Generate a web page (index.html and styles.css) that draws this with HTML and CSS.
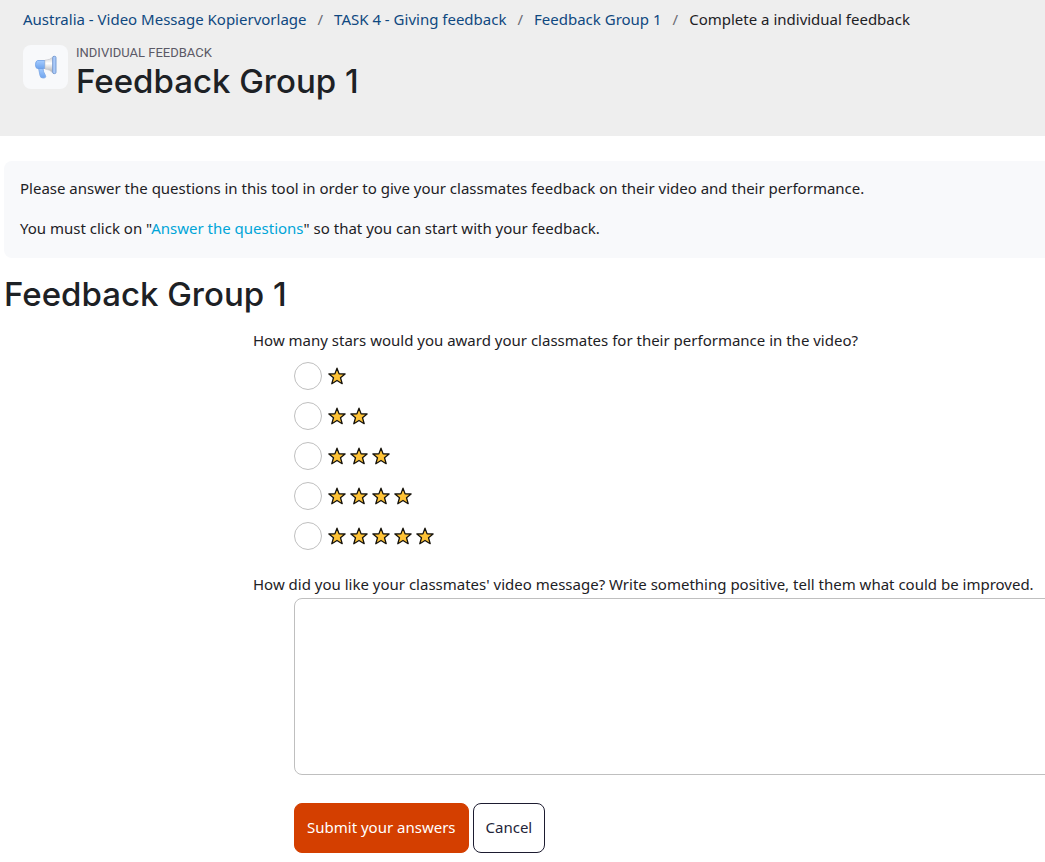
FILE: index.html
```
<!DOCTYPE html>
<html lang="en">
<head>
<meta charset="utf-8">
<meta name="viewport" content="width=device-width, initial-scale=1">
<title>Feedback Group 1</title>
<link rel="stylesheet" href="styles.css">
</head>
<body>
<svg class="defs" aria-hidden="true">
  <symbol id="star" viewBox="0 0 18 18">
    <path d="M9 1.200 L11.100 6.900 L17.100 7 L12.500 10.700 L14.200 16.700 L9 13.500 L3.800 16.700 L5.500 10.700 L.9 7 L6.900 6.900 Z" fill="#ffc336" stroke="#16130c" stroke-width="1.3" stroke-linejoin="round"/>
  </symbol>
</svg>
<header class="page-header">
  <nav aria-label="Breadcrumb">
    <ol class="breadcrumb">
      <li><a href="#">Australia - Video Message Kopiervorlage</a></li>
      <li><a href="#">TASK 4 - Giving feedback</a></li>
      <li><a href="#">Feedback Group 1</a></li>
      <li>Complete a individual feedback</li>
    </ol>
  </nav>
  <div class="activity">
    <div class="activity-icon">
      <svg viewBox="0 0 24 24" width="24" height="24" aria-hidden="true">
        <defs>
          <linearGradient id="blue" x1="0" y1="0" x2="0" y2="1"><stop offset="0" stop-color="#a5ccff"/><stop offset="1" stop-color="#6fa4ee"/></linearGradient>
          <linearGradient id="cone" x1="0" y1="0" x2="0" y2="1"><stop offset="0" stop-color="#cfcfd2"/><stop offset=".4" stop-color="#fff"/><stop offset="1" stop-color="#a9a9ad"/></linearGradient>
        </defs>
        <path d="M4.500 13 L9 13.500 Q9 16.500 11.500 20.500 Q12.500 23 9 23 Q6.300 23 6 20.500 Z" fill="url(#blue)" stroke="#78a5e4" stroke-width=".8"/>
        <path d="M3.500 5.500 H11 V13.500 H3.500 Q1.500 13.500 1.500 9.800 Q1.500 6 3.500 5.500 Z" fill="url(#blue)" stroke="#6d9ee5" stroke-width=".8"/>
        <path d="M11 5.200 Q16 5 19 2 V18 Q16 14.500 11 14 Z" fill="url(#cone)" stroke="#c3c3c8" stroke-width=".6"/>
        <rect x="18.700" y="1.300" width="3.300" height="17.300" rx="1.300" fill="#a9c9f8" stroke="#7196cf" stroke-width=".9"/>
      </svg>
    </div>
    <div class="activity-title">
      <div class="activity-type">INDIVIDUAL FEEDBACK</div>
      <h1>Feedback Group 1</h1>
    </div>
  </div>
</header>
<main class="content">
  <section class="intro">
    <p>Please answer the questions in this tool in order to give your classmates feedback on their video and their performance.</p>
    <p>You must click on "<a href="#">Answer the questions</a>" so that you can start with your feedback.</p>
  </section>
  <h2>Feedback Group 1</h2>
  <form class="questions">
    <fieldset class="rating">
      <legend>How many stars would you award your classmates for their performance in the video?</legend>
      <label class="option"><input type="radio" name="stars" value="1" aria-label="1 star"><svg class="star"><use href="#star"/></svg></label>
      <label class="option"><input type="radio" name="stars" value="2" aria-label="2 stars"><svg class="star"><use href="#star"/></svg><svg class="star"><use href="#star"/></svg></label>
      <label class="option"><input type="radio" name="stars" value="3" aria-label="3 stars"><svg class="star"><use href="#star"/></svg><svg class="star"><use href="#star"/></svg><svg class="star"><use href="#star"/></svg></label>
      <label class="option"><input type="radio" name="stars" value="4" aria-label="4 stars"><svg class="star"><use href="#star"/></svg><svg class="star"><use href="#star"/></svg><svg class="star"><use href="#star"/></svg><svg class="star"><use href="#star"/></svg></label>
      <label class="option"><input type="radio" name="stars" value="5" aria-label="5 stars"><svg class="star"><use href="#star"/></svg><svg class="star"><use href="#star"/></svg><svg class="star"><use href="#star"/></svg><svg class="star"><use href="#star"/></svg><svg class="star"><use href="#star"/></svg></label>
    </fieldset>
    <div class="comment">
      <label for="comment">How did you like your classmates' video message? Write something positive, tell them what could be improved.</label>
      <textarea id="comment" rows="7"></textarea>
    </div>
    <div class="actions">
      <button class="button primary" type="submit">Submit your answers</button>
      <button class="button secondary" type="button">Cancel</button>
    </div>
  </form>
</main>
</body>
</html>
```
FILE: styles.css
```
* { box-sizing: border-box; }
body {
  margin: 0;
  overflow-x: hidden;
  background: #fff;
  color: #1d2125;
  font: 15px/24px "Noto Sans", sans-serif;
}
.defs { display: none; }
a { text-decoration: none; }
.page-header {
  background: #eee;
  padding: 7px 23px 35px;
}
.breadcrumb {
  display: flex;
  flex-wrap: wrap;
  margin: 0;
  padding: 0;
  list-style: none;
}
.breadcrumb a { color: #0f4880; }
.breadcrumb li + li::before {
  content: "/";
  padding: 0 11px;
  color: #6a6a73;
}
.activity {
  display: flex;
  align-items: flex-start;
  gap: 8px;
  padding-top: 14px;
}
.activity-icon {
  display: grid;
  place-items: center;
  width: 45px;
  height: 44px;
  border-radius: 8px;
  background: #f8f9fb;
}
.activity-type {
  color: #5b5966;
  font-family: Roboto, sans-serif;
  font-size: 13px;
  line-height: 16px;
}
h1, h2 {
  margin: 0;
  font-family: Inter, sans-serif;
  font-size: 33px;
  line-height: 40px;
  font-weight: 500;
}
.content {
  margin-right: -16px;
  padding: 25px 0 8px 4px;
}
.intro {
  padding: 15px 16px 18px;
  border-radius: 8px;
  background: #f8f9fb;
}
.intro p { margin: 0 0 16px; }
.intro p:last-child { margin: 0; }
.intro a { color: #00a5d8; }
h2 { margin-top: 16px; }
.questions {
  padding: 14px 0 0 249px;
}
.rating {
  min-width: 0;
  margin: 0;
  padding: 0;
  border: 0;
}
.rating legend { padding: 0; }
.option {
  display: flex;
  align-items: center;
  gap: 4px;
  height: 40px;
  margin-left: 41px;
}
.rating legend + .option { margin-top: 4px; }
.option input {
  appearance: none;
  width: 28px;
  height: 28px;
  margin: 0 2px 0 0;
  border: 1px solid #bfbfbf;
  border-radius: 50%;
  background: #fff;
}
.star { width: 18px; height: 18px; }
.comment { margin-top: 16px; }
.comment label {
  display: block;
  white-space: nowrap;
}
.comment textarea {
  display: block;
  width: calc(100% - 41px);
  height: 177px;
  margin: 2px 0 0 41px;
  padding: 8px 12px;
  border: 1px solid #bfbfbf;
  border-radius: 8px;
  font: inherit;
  resize: none;
}
.actions {
  display: flex;
  gap: 4px;
  margin: 28px 0 0 41px;
}
.button {
  padding: 11px 12px 13px;
  border: 1px solid #1d1c30;
  border-radius: 8px;
  background: #fff;
  color: #24253a;
  font: inherit;
}
.primary {
  border-color: #d43f00;
  background: #d43f00;
  color: #fff;
}
```
